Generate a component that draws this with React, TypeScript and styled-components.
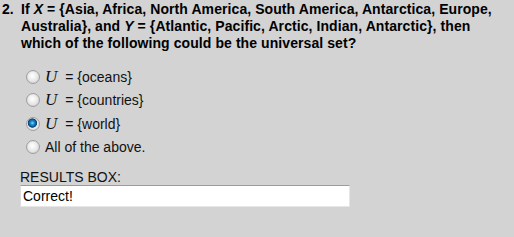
import { createGlobalStyle } from "styled-components";
import styled from "styled-components";

const GlobalStyle = createGlobalStyle`
  html, body {
    margin: 0;
    padding: 0;
    background: #d3d3d3;
  }
  body {
    font-family: "Liberation Sans", Arial, sans-serif;
    color: #000;
  }
`;

const options = [
  { label: "{oceans}", math: true, checked: false },
  { label: "{countries}", math: true, checked: false },
  { label: "{world}", math: true, checked: true },
  { label: "All of the above.", math: false, checked: false },
];

const App = () => {
  return (
    <Page>
      <GlobalStyle />
      <Question>
        <Num>2.</Num>
        <QText>
          If <Var>X</Var> = {"{"}Asia, Africa, North America, South America, Antarctica, Europe,
          <br />
          Australia{"}"}, and <Var>Y</Var> = {"{"}Atlantic, Pacific, Arctic, Indian, Antarctic{"}"}, then
          <br />
          which of the following could be the universal set?
        </QText>
      </Question>
      <Options>
        {options.map((o, i) => (
          <Option key={i}>
            <Radio checked={o.checked} />
            <OptionLabel>
              {o.math ? (
                <>
                  <MathU>U</MathU>= {o.label}
                </>
              ) : (
                o.label
              )}
            </OptionLabel>
          </Option>
        ))}
      </Options>
      <Results>
        <ResultsLabel>RESULTS BOX:</ResultsLabel>
        <ResultsInput>Correct!</ResultsInput>
      </Results>
    </Page>
  );
};

const Page = styled.div`
  width: 514px;
  height: 237px;
  padding: 1px 0 0 2px;
  box-sizing: border-box;
`;

const Question = styled.div`
  display: flex;
  font-weight: bold;
  font-size: 14px;
  line-height: 17px;
  letter-spacing: 0.08px;
  white-space: nowrap;
`;

const Num = styled.div`
  width: 19px;
  flex-shrink: 0;
`;

const QText = styled.div`
  flex: 1;
`;

const Var = styled.i`
  font-weight: bold;
`;

const Options = styled.div`
  display: flex;
  flex-direction: column;
  gap: 3.3px;
  margin: 15px 0 0 24px;
`;

const Option = styled.div`
  display: flex;
  align-items: center;
  height: 20px;
  gap: 5px;
`;

const Radio = styled.span<{ checked: boolean }>`
  width: 14px;
  height: 14px;
  border-radius: 50%;
  box-sizing: border-box;
  border: 1px solid #a0a0a0;
  background: ${(p) =>
    p.checked
      ? "radial-gradient(circle at 45% 42%, #8fe0ff 0, #2a9ad8 1.5px, #0b5e9c 3.5px, #083f6e 4.3px, #eeeeee 5px, #d6d6d6 100%)"
      : "radial-gradient(circle at 45% 40%, #ffffff 0, #f2f2f2 3px, #cfcfcf 100%)"};
  box-shadow: inset 0 0 1px rgba(0, 0, 0, 0.15);
`;

const OptionLabel = styled.span`
  font-size: 14px;
  color: #111;
`;

const MathU = styled.span`
  font-family: "Liberation Serif", "Times New Roman", serif;
  font-style: italic;
  font-size: 17px;
  margin-right: 8px;
`;

const Results = styled.div`
  margin: 13px 0 0 18px;
  display: flex;
  flex-direction: column;
`;

const ResultsLabel = styled.div`
  font-size: 14px;
  line-height: 14px;
  color: #111;
  margin-bottom: 1px;
`;

const ResultsInput = styled.div`
  width: 330px;
  height: 22px;
  box-sizing: border-box;
  background: #fff;
  border-top: 1px solid #9c9c9c;
  border-left: 1px solid #dcdcdc;
  border-right: 1px solid #e6e6e6;
  border-bottom: 1px solid #e6e6e6;
  font-size: 14px;
  padding: 2px 2px;
  line-height: 16px;
`;

export default App;
